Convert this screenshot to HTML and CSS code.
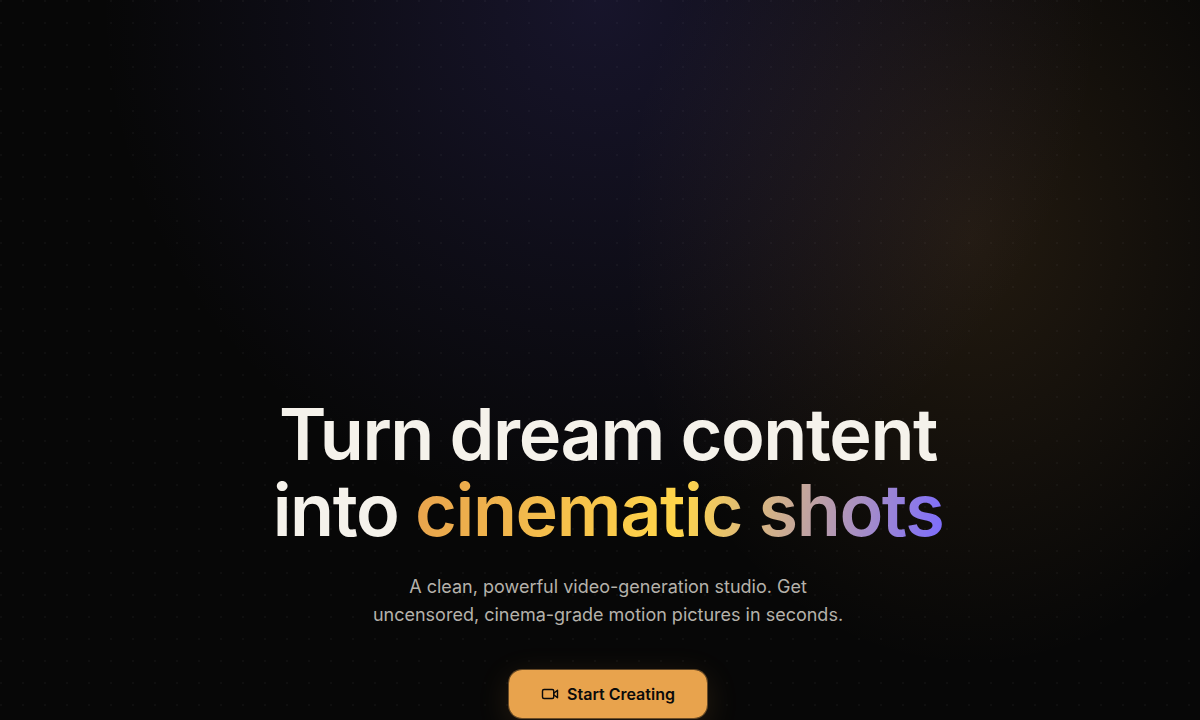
FILE: index.html
```html
<!DOCTYPE html>
<html lang="en">
<head>
  <meta charset="UTF-8">
  <meta name="viewport" content="width=device-width, initial-scale=1.0">
  <title>Cinematic Shots</title>
  <link rel="stylesheet" href="styles.css">
</head>
<body>
  <main class="hero">
    <h1>Turn dream content<br>into <span class="gradient-text">cinematic shots</span></h1>
    <p class="subtitle">A clean, powerful video-generation studio. Get uncensored, cinema-grade motion pictures in seconds.</p>
    <button class="cta" type="button">
      <svg width="18" height="18" viewBox="0 0 24 24" fill="none" stroke="currentColor" stroke-width="1.9" stroke-linecap="round" stroke-linejoin="round" aria-hidden="true">
        <rect x="2" y="6" width="15" height="12" rx="2"></rect>
        <path d="M17 11l5-4v10l-5-4"></path>
      </svg>
      Start Creating
    </button>
  </main>
</body>
</html>
```
FILE: styles.css
```css
* {
  box-sizing: border-box;
}
body {
  margin: 0;
  font-family: Inter, sans-serif;
  background-color: #070707;
  color: #f5f2eb;
}
.hero {
  display: flex;
  flex-direction: column;
  align-items: center;
  min-height: 100vh;
  padding: 396px 24px 0 40px;
  text-align: center;
  background-image:
    radial-gradient(circle at 1px 1px, rgba(255, 255, 255, 0.03) 1px, transparent 1px),
    radial-gradient(ellipse 500px 520px at 50% 0, rgba(108, 92, 231, 0.16), transparent),
    radial-gradient(ellipse 350px 430px at 81% 33%, rgba(232, 163, 77, 0.12), transparent);
  background-size: 22px 22px, auto, auto;
}
h1 {
  margin: 0;
  font-size: 72px;
  line-height: 76px;
  font-weight: 600;
  letter-spacing: -0.02em;
}
.gradient-text {
  background: linear-gradient(100deg, #e8a34d, #ffd54a 50%, #7c6cff);
  -webkit-background-clip: text;
  background-clip: text;
  color: transparent;
}
.subtitle {
  max-width: 500px;
  margin: 25px 0 0;
  font-size: 18px;
  line-height: 28px;
  color: #b5b2ab;
}
.cta {
  display: flex;
  align-items: center;
  gap: 8px;
  height: 50px;
  margin-top: 40px;
  padding: 0 32px;
  border: 1px solid rgba(232, 163, 77, 0.4);
  border-radius: 14px;
  background-color: #e8a34d;
  background-clip: padding-box;
  color: #0a0a0a;
  font-family: inherit;
  font-size: 16px;
  font-weight: 600;
  cursor: pointer;
  box-shadow: 0 8px 32px rgba(232, 163, 77, 0.14);
}
```
